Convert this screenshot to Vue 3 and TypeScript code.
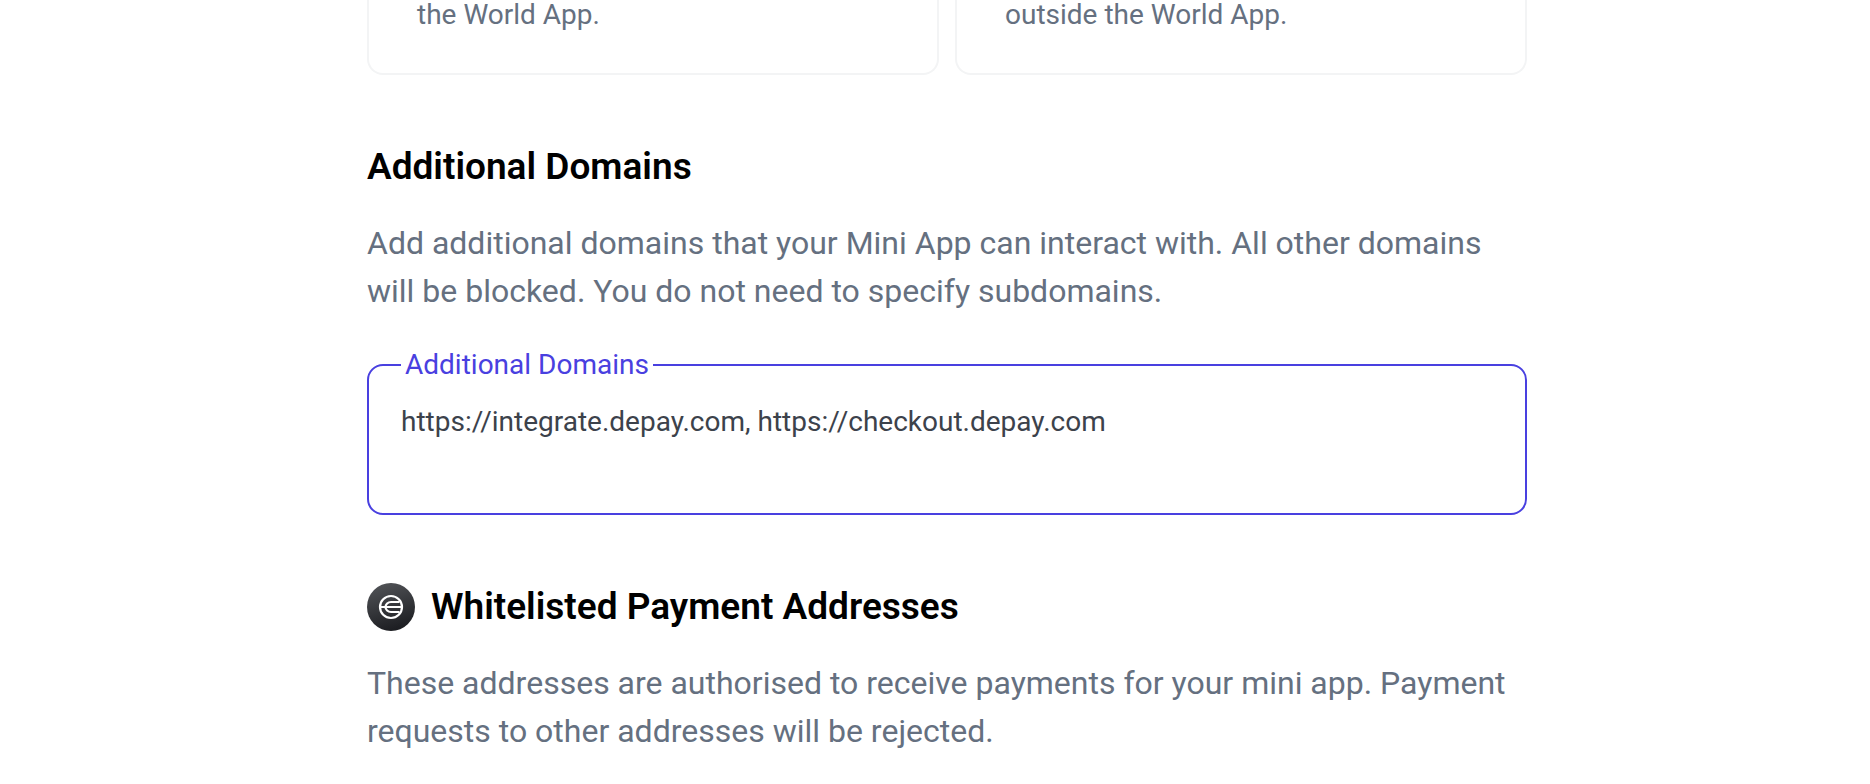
<script setup lang="ts">
import { ref } from 'vue'

const cards: string[] = ['the World App.', 'outside the World App.']
const domains = ref('https://integrate.depay.com, https://checkout.depay.com')
</script>

<template>
  <main class="page">
    <div class="content">
      <div class="cards">
        <div v-for="card in cards" :key="card" class="card">
          <p class="card-text">{{ card }}</p>
        </div>
      </div>

      <section class="section">
        <h2 class="title">Additional Domains</h2>
        <p class="description">
          Add additional domains that your Mini App can interact with. All other domains will be
          blocked. You do not need to specify subdomains.
        </p>
        <fieldset class="field">
          <legend class="legend">
            <label for="domains">Additional Domains</label>
          </legend>
          <textarea id="domains" v-model="domains" class="input" rows="2" spellcheck="false" />
        </fieldset>
      </section>

      <section class="section">
        <div class="heading">
          <svg class="icon" viewBox="0 0 48 48" aria-hidden="true">
            <defs>
              <linearGradient id="badge" x1="0.3" y1="0" x2="0.6" y2="1">
                <stop offset="0" stop-color="#505256" />
                <stop offset="1" stop-color="#1b1c20" />
              </linearGradient>
            </defs>
            <circle cx="24" cy="24" r="24" fill="url(#badge)" />
            <g fill="none" stroke="#fff" stroke-width="2.2">
              <circle cx="24" cy="24" r="11" />
              <path d="M13 24h21.500M32.500 19h-8.500a5.500 5 0 0 0 0 10h8.500" />
            </g>
          </svg>
          <h2 class="title">Whitelisted Payment Addresses</h2>
        </div>
        <p class="description">
          These addresses are authorised to receive payments for your mini app. Payment requests to
          other addresses will be rejected.
        </p>
      </section>
    </div>
  </main>
</template>

<style>
body {
  margin: 0;
  background: #fff;
}
</style>

<style scoped>
.page {
  padding-left: 24px;
  font-family: Roboto, "Liberation Sans", sans-serif;
  font-weight: 450;
  color: #657080;
}

.content {
  max-width: 1160px;
  margin: 0 auto;
}

.cards {
  display: grid;
  grid-template-columns: 1fr 1fr;
  gap: 16px;
}

.card {
  padding: 0 48px 43px;
  border: 2px solid #f3f4f5;
  border-top: 0;
  border-radius: 0 0 16px 16px;
}

.card-text {
  margin: 0;
  font-size: 28px;
  line-height: 30px;
}

.section {
  padding-top: 68px;
}

.heading {
  display: flex;
  align-items: center;
  gap: 16px;
}

.icon {
  flex: none;
  width: 48px;
  height: 48px;
}

.title {
  margin: 0;
  font-size: 37px;
  font-weight: 600;
  line-height: 48px;
  color: #000;
}

.description {
  margin: 28px 0 0;
  font-size: 32px;
  line-height: 48px;
}

.field {
  min-width: 0;
  margin: 36px 0 0;
  padding: 22px 32px 28px;
  border: 2px solid #4940e0;
  border-radius: 16px;
}

.legend {
  padding: 0 4px;
  font-size: 28px;
  line-height: 28px;
  color: #4940e0;
}

.input {
  display: block;
  box-sizing: border-box;
  width: 100%;
  padding: 0;
  border: 0;
  outline: 0;
  resize: none;
  overflow: hidden;
  background: transparent;
  font-family: inherit;
  font-size: 28px;
  font-weight: 450;
  line-height: 42px;
  color: #3c424b;
}
</style>
